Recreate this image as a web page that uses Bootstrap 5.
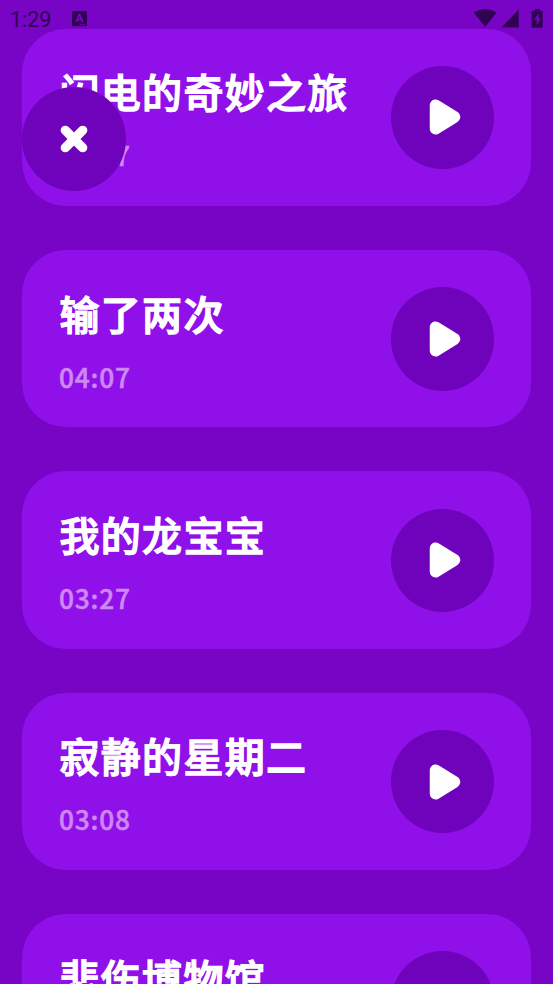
<!DOCTYPE html>
<html lang="zh-CN">
<head>
<meta charset="utf-8">
<meta name="viewport" content="width=device-width, initial-scale=1">
<title>故事</title>
<link href="https://cdn.jsdelivr.net/npm/bootstrap@5.3.0/dist/css/bootstrap.min.css" rel="stylesheet">
<style>
body{background:#7805c5;height:984px;font-family:"Noto Sans CJK SC",sans-serif}
.status{height:28.7px;color:#310253;font:400 21.5px/20px Roboto,sans-serif;padding:10px 9px 0 10px}
.status svg{display:block}
.status .app-mark{margin:1px 0 0 21px}
.status .signals{margin-top:-1px}
.story{height:177.1px;border-radius:44px;background:#9010ea;padding:8px 37px 0}
.story-list{gap:44.3px;padding:0 22px;height:955.3px}
.story-title{font-size:40px;letter-spacing:1.3px;line-height:50px;font-weight:500;margin:-1px 0 19px .5px;color:#fff;-webkit-text-stroke:1.3px #fff}
.story-time{font:500 26.3px/40px "Noto Sans CJK SC",sans-serif;color:#cd88f5;letter-spacing:.8px;-webkit-text-stroke:.5px #cd88f5}
.round-btn{width:103.5px;height:103.5px;background:#6f03bb;border:0;flex:none}
.story .round-btn{margin-top:-7.500px}
.play{margin-left:5px}
.close-btn{left:22px;top:87px}
</style>
</head>
<body class="overflow-hidden position-relative">
<svg class="d-none"><symbol id="play" viewBox="0 0 32 36"><path d="M6.500 6.200v23.600L25.500 18z" fill="#fff" stroke="#fff" stroke-width="11.500" stroke-linejoin="round"/></symbol></svg>
<header class="status d-flex justify-content-between">
  <div class="d-flex"><span>1:29</span>
    <svg class="app-mark" width="16" height="16" viewBox="0 0 16 16"><rect width="15" height="15.200" rx="1.500" fill="#310253"/><path d="M4.200 10.800 7.300 3.600h.4l3.100 7.200M5.300 8.600h4.400" fill="none" stroke="#7805c5" stroke-width="1.700"/><path d="M8 13.500h5.500" stroke="#7805c5" stroke-dasharray="1.300 .7"/></svg>
  </div>
  <svg class="signals" width="72" height="20" viewBox="0 0 72 20" fill="#310253"><path d="M1.700 3.500Q13-3.500 24.600 3.500L13.200 18z"/><path d="M46.700.5V18.600H29.500z"/><path d="M63 0h5v1.800h1.700a1 1 0 0 1 1 1v15a1 1 0 0 1-1 1h-9a1 1 0 0 1-1-1v-15a1 1 0 0 1 1-1H63z"/><path d="m66.500 4.500-4.200 6h2.500v5.500l4-6.500h-2.300z" fill="#7805c5"/></svg>
</header>
<main class="story-list d-flex flex-column overflow-hidden">
  <section class="story d-flex align-items-center justify-content-between flex-shrink-0"><div><h2 class="story-title">闪电的奇妙之旅</h2><div class="story-time">03:17</div></div><button class="round-btn rounded-circle p-0" aria-label="播放"><svg class="play" width="32" height="36"><use href="#play"/></svg></button></section>
  <section class="story d-flex align-items-center justify-content-between flex-shrink-0"><div><h2 class="story-title">输了两次</h2><div class="story-time">04:07</div></div><button class="round-btn rounded-circle p-0" aria-label="播放"><svg class="play" width="32" height="36"><use href="#play"/></svg></button></section>
  <section class="story d-flex align-items-center justify-content-between flex-shrink-0"><div><h2 class="story-title">我的龙宝宝</h2><div class="story-time">03:27</div></div><button class="round-btn rounded-circle p-0" aria-label="播放"><svg class="play" width="32" height="36"><use href="#play"/></svg></button></section>
  <section class="story d-flex align-items-center justify-content-between flex-shrink-0"><div><h2 class="story-title">寂静的星期二</h2><div class="story-time">03:08</div></div><button class="round-btn rounded-circle p-0" aria-label="播放"><svg class="play" width="32" height="36"><use href="#play"/></svg></button></section>
  <section class="story d-flex align-items-center justify-content-between flex-shrink-0"><div><h2 class="story-title">悲伤博物馆</h2><div class="story-time">&nbsp;</div></div><button class="round-btn rounded-circle p-0" aria-label="播放"></button></section>
</main>
<button class="round-btn close-btn rounded-circle position-absolute p-0" aria-label="关闭"><svg width="28" height="28" viewBox="0 0 28 28"><path d="M5.300 5.300l17.400 17.400M22.700 5.300 5.300 22.700" stroke="#fff" stroke-width="9.300" stroke-linecap="round"/></svg></button>
<script src="https://cdn.jsdelivr.net/npm/bootstrap@5.3.0/dist/js/bootstrap.bundle.min.js"></script>
</body>
</html>
